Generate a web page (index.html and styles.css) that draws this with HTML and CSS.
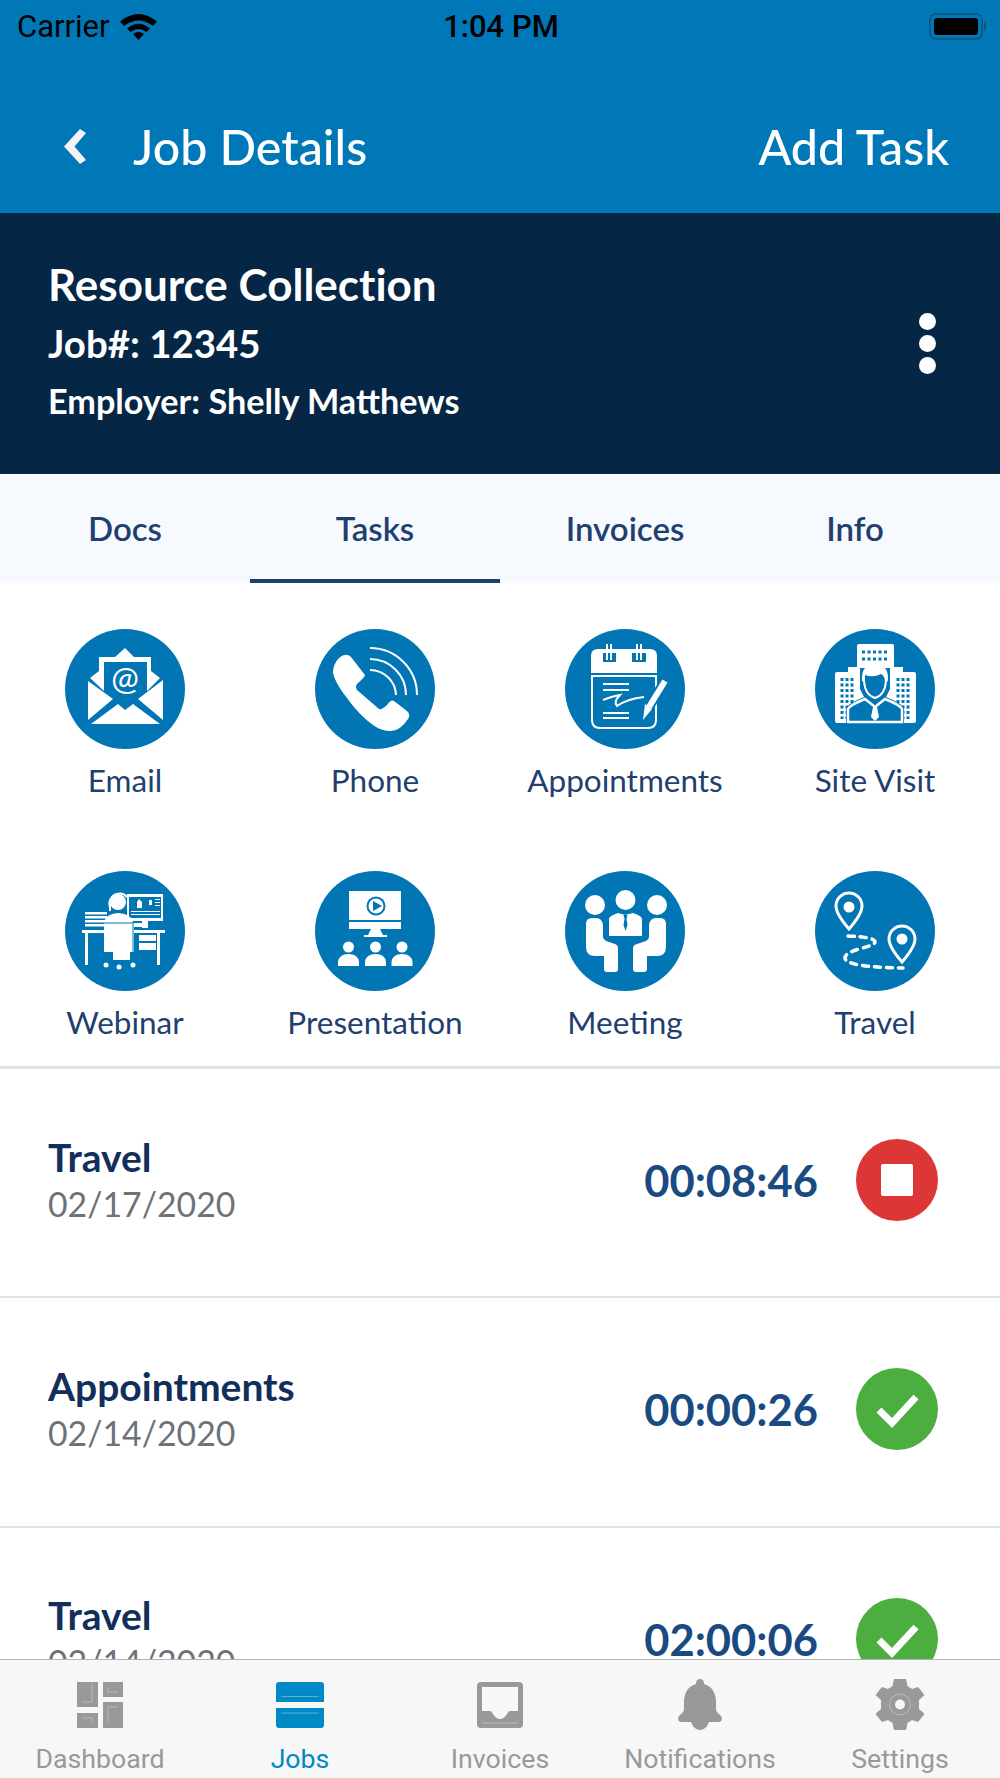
FILE: index.html
```html
<!DOCTYPE html>
<html>
<head>
<meta charset="utf-8">
<title>Job Details</title>
<link rel="stylesheet" href="styles.css">
</head>
<body>
<div class="phone">
	<!--header-->
	<div class="top">
		<div class="status">
			<div class="status-left">
				<span>Carrier</span>
				<svg class="wifi" viewBox="0 0 37 27"><path d="M0 8.500Q18.500-6.500 37 8.500L33 13Q18.500 2 4 13Z"/><path d="M7 15.500Q18.500 6 30 15.500L26.500 19Q18.500 13 10.500 19Z"/><path d="M13 21Q18.500 17 24 21L18.500 27Z"/></svg>
			</div>
			<span class="time">1:04 PM</span>
			<div class="battery"><i></i></div>
		</div>
		<div class="nav">
			<div class="nav-left">
				<svg class="back" viewBox="0 0 22 35"><path d="M16 0L22 4L10.500 17.500L22 31L16 35L0 17.500Z"/></svg>
				<span>Job Details</span>
			</div>
			<span class="add">Add Task</span>
		</div>
	</div>
	<div class="job">
		<div>
			<h1>Resource Collection</h1>
			<p class="num">Job#: 12345</p>
			<p class="emp">Employer: Shelly Matthews</p>
		</div>
		<div class="dots"><i></i><i></i><i></i></div>
	</div>
	<!--tabs-->
	<div class="tabs">
		<span>Docs</span>
		<span class="on">Tasks</span>
		<span>Invoices</span>
		<span class="last">Info</span>
	</div>
	<!--task types-->
	<div class="types">
		<div class="type">
			<svg viewBox="0 0 120 120"><circle cx="60" cy="60" r="60" class="bg"/>
				<path class="w" d="M60 19L69 28H86V42L95 49L82 62V33H39V62L25 49L34 42V28H50Z"/>
				<path class="w" d="M23 52L48 70L23 91ZM98 51L73 70L98 91ZM26 95L53 75L60 81L68 75L95 95Z"/>
				<text x="60" y="61" class="at">@</text>
			</svg>
			<span>Email</span>
		</div>
		<div class="type">
			<svg viewBox="0 0 120 120"><circle cx="60" cy="60" r="60" class="bg"/>
				<path class="w" d="M24 29Q31 23 36 28L50 46Q50 48 42 55Q40 58 42 61L64 80Q67 81 72 76Q76 70 79 72L92 82Q96 86 93 90Q85 102 76 102Q66 102 58 96Q44 86 32 69Q20 54 18 44Q18 35 24 29Z"/>
				<path class="ln" d="M55 19A47 47 0 0 1 102 66M55 30A36 36 0 0 1 91 66M55 41A26 26 0 0 1 81 66"/>
			</svg>
			<span>Phone</span>
		</div>
		<div class="type">
			<svg viewBox="0 0 120 120"><circle cx="60" cy="60" r="60" class="bg"/>
				<path class="w" d="M33 20H85Q92 20 92 27V44H26V27Q26 20 33 20ZM38 24V33H51V24ZM67 24V33H81V24Z" fill-rule="evenodd"/>
				<path class="w" d="M41 15H43V31H41ZM45 15H47V31H45ZM71 15H73V31H71ZM75 15H77V31H75Z"/>
				<path class="ln" d="M27 47H91V91Q91 99 83 99H35Q27 99 27 91Z"/>
				<path class="ln" d="M38 55H64M38 61H64M38 84H64M38 89H64"/>
				<path class="ln" d="M38 71Q48 67 55 66Q48 73 52 77Q62 70 79 68"/>
				<path class="halo" d="M100 52L84 78"/>
				<path class="pen" d="M100 52L84 78"/>
				<path class="w" d="M80 75L87 80L78 91Z"/>
			</svg>
			<span>Appointments</span>
		</div>
		<div class="type">
			<svg viewBox="0 0 120 120"><circle cx="60" cy="60" r="60" class="bg"/>
				<path class="w" d="M44 15H77Q79 15 79 17V42H42V17Q42 15 44 15Z"/>
				<path class="w" d="M33 38H88V43H99Q101 43 101 45V92Q101 94 99 94H22Q20 94 20 92V45Q20 43 22 43H33Z"/>
				<path class="win" d="M47 23H74M47 30H74M27 49V90M32 49V90M37 49V90M83 49V90M88 49V90M93 49V90"/>
				<path class="halo2" d="M45 39H75V60L71 68Q86 74 89 79V96H31V79Q34 74 49 68L45 60Z"/>
				<path class="body" d="M33 93V80Q35 76 50 70L60 78L70 70Q85 76 87 80V93Z"/>
				<path class="w" d="M47 52Q46 35 60 35Q74 35 73 52L70 53Q70 47 66 45Q58 49 50 46L50 53Z"/>
				<path class="ln" d="M49 52Q50 66 60 69Q70 66 71 52"/>
				<path class="w" d="M58 78H62L64 88L60 92L56 88Z"/>
			</svg>
			<span>Site Visit</span>
		</div>
		<div class="type">
			<svg viewBox="0 0 120 120"><circle cx="60" cy="60" r="60" class="bg"/>
				<path class="w" d="M62 23H98V50H83V57H77V50H62Z"/>
				<path class="cut" d="M64 26H96V47H64Z"/>
				<path class="w" d="M72 37V31L74 28L77 31V37ZM84 34V29H87V34ZM90 28H95V29H90ZM90 31H95V32H90ZM90 34H95V35H90ZM66 40H95V41H66ZM66 43H95V44H66Z"/>
				<path class="ln" d="M45 36A10 10 0 0 1 62 26"/>
				<path class="w" d="M44 33H46V40H44Z"/>
				<circle cx="53" cy="31" r="8" class="w"/>
				<path class="w" d="M20 41H42V43.500H20ZM20 45H42V47.500H20ZM20 49H42V51.500H20ZM20 53H42V55.500H20Z"/>
				<path class="w" d="M17 59H100V62H17ZM20 62H23V94H20ZM92 62H95V94H92ZM74 64H91V70H74ZM74 72H91V79H74Z"/>
				<path class="w" d="M53 42Q67 43 68 52H82V56H69V81H65V89H48V81H39V52Q40 43 53 42Z"/>
				<path class="edge" d="M39 52H68V81M54 89V94M43 93L54 90L66 93"/>
				<circle cx="41" cy="94" r="2.500" class="w"/><circle cx="54" cy="96" r="2.500" class="w"/><circle cx="68" cy="94" r="2.500" class="w"/>
			</svg>
			<span>Webinar</span>
		</div>
		<div class="type">
			<svg viewBox="0 0 120 120"><circle cx="60" cy="60" r="60" class="bg"/>
				<path class="w" d="M34 20H86V49H34ZM34 51H86V58H34ZM56 58H65L68 64H53ZM49 64H72V66H49Z"/>
				<circle cx="61" cy="35" r="9.500" class="cut"/>
				<circle cx="61" cy="35" r="7.500" class="w"/>
				<path class="bl" d="M58 30L67 35L58 40Z"/>
				<circle cx="33.500" cy="76" r="5.500" class="w"/><circle cx="60.500" cy="76" r="5.500" class="w"/><circle cx="87" cy="76" r="5.500" class="w"/>
				<path class="w" d="M23 95V91Q24 83 33.500 83Q43 83 44 91V95ZM50 95V91Q51 83 60.500 83Q70 83 71 91V95ZM76.500 95V91Q77.500 83 87 83Q96.500 83 97.500 91V95Z"/>
			</svg>
			<span>Presentation</span>
		</div>
		<div class="type">
			<svg viewBox="0 0 120 120"><circle cx="60" cy="60" r="60" class="bg"/>
				<circle cx="30" cy="34" r="10" class="w"/><circle cx="60.500" cy="29" r="10" class="w"/><circle cx="92" cy="34" r="10" class="w"/>
				<path class="w" d="M53 42L60 44L68 42Q77 45 77 48V65H44V48Q44 45 53 42Z"/>
				<path class="bl" d="M58.500 44H62.500L61.500 48L62.500 54L60.500 60L58.500 54L59.500 48Z"/>
				<path class="w" d="M27 47H31Q37 47 38 54V66Q38 68 41 70L50 73Q53 74 53 77V98Q53 101 50 101H42Q39 101 39 98V85H30Q21 85 21 76V53Q21 47 27 47Z"/>
				<path class="w" d="M95 47H91Q85 47 84 54V66Q84 68 81 70L72 73Q68 74 68 77V98Q68 101 71 101H79Q82 101 82 98V85H92Q101 85 101 76V53Q101 47 95 47Z"/>
			</svg>
			<span>Meeting</span>
		</div>
		<div class="type">
			<svg viewBox="0 0 120 120"><circle cx="60" cy="60" r="60" class="bg"/>
				<path class="ring" d="M34 58Q21 43 21 35A13 13 0 0 1 47 35Q47 43 34 58Z"/>
				<circle cx="34" cy="36" r="5.500" class="w"/>
				<path class="ring" d="M87 91Q74 76 74 68A13 13 0 0 1 100 68Q100 76 87 91Z"/>
				<circle cx="87" cy="68" r="5.500" class="w"/>
				<path class="dash" d="M33 65Q60 66 60 71Q60 74 44 78Q30 82 30 87Q30 96 88 97"/>
			</svg>
			<span>Travel</span>
		</div>
	</div>
	<!--task list-->
	<div class="list">
		<div class="row">
			<div class="row-text"><h3>Travel</h3><p>02/17/2020</p></div>
			<div class="timer">00:08:46</div>
			<div class="act stop"><i></i></div>
		</div>
		<div class="row">
			<div class="row-text"><h3>Appointments</h3><p>02/14/2020</p></div>
			<div class="timer">00:00:26</div>
			<div class="act done"><svg viewBox="0 0 82 82"><path d="M23 42L36 55L60 29"/></svg></div>
		</div>
		<div class="row">
			<div class="row-text"><h3>Travel</h3><p>02/14/2020</p></div>
			<div class="timer">02:00:06</div>
			<div class="act done"><svg viewBox="0 0 82 82"><path d="M23 42L36 55L60 29"/></svg></div>
		</div>
	</div>
	<!--tab bar-->
	<div class="bar">
		<div class="bar-item">
			<svg viewBox="0 0 46 46"><path d="M0 0H21V25H0ZM26 0H46V15H26ZM26 20H46V46H26ZM0 31H21V46H0Z"/><path class="gap" d="M15 1V20H5M31 5V10H41M31 41V25H41M5 36H15V41"/></svg>
			<span>Dashboard</span>
		</div>
		<div class="bar-item on">
			<svg viewBox="0 0 48 46"><path d="M3 0H45Q48 0 48 3V20H0V3Q0 0 3 0ZM0 26H48V43Q48 46 45 46H3Q0 46 0 43Z"/><path class="gap" d="M5 14.500H43M5 31H43"/></svg>
			<span>Jobs</span>
		</div>
		<div class="bar-item">
			<svg viewBox="0 0 46 46"><path fill-rule="evenodd" d="M4 0H42Q46 0 46 4V42Q46 46 42 46H4Q0 46 0 42V4Q0 0 4 0ZM5 5V29H13Q15 29 16 32Q19 37 23 37Q27 37 30 32Q31 29 33 29H41V5Z"/><path class="gap" d="M5 41H41"/></svg>
			<span>Invoices</span>
		</div>
		<div class="bar-item">
			<svg class="tall bell" viewBox="0 0 44 51"><path d="M22 0Q26 0 26 5Q37 8 38 22V30Q38 33 42 36Q46 40 42 43H31Q28 51 22 51Q16 51 13 43H2Q-2 40 2 36Q6 33 6 30V22Q7 8 18 5Q18 0 22 0Z"/></svg>
			<span>Notifications</span>
		</div>
		<div class="bar-item">
			<svg class="tall gear" viewBox="0 0 50 51"><path fill-rule="evenodd" d="M19 0H31L32.500 7L37 10L43 8L49.500 16L44 21V30L49.500 35L43 43L37 41L32.500 44L31 51H19L17.500 44L13 41L7 43L0.500 35L6 30V21L0.500 16L7 8L13 10L17.500 7ZM25 20.500A5 5 0 1 0 25 30.500A5 5 0 1 0 25 20.500Z"/><circle class="gap" cx="25" cy="25.500" r="10.500"/></svg>
			<span>Settings</span>
		</div>
	</div>
</div>
</body>
</html>
```

FILE: styles.css
```css
html,body,h1,h3,p{margin:0;padding:0;}
body{background:#fff;font-family:"Lato","Noto Sans",sans-serif;}
.phone{width:1000px;height:1778px;display:flex;flex-direction:column;overflow:hidden;}

/*header*/
.top{height:213px;background:#0078b8;color:#fff;}
.status{height:53px;display:grid;grid-template-columns:1fr auto 1fr;align-items:center;padding:0 15px 0 17px;color:#000;font:400 31px Roboto,sans-serif;}
.status-left{display:flex;align-items:center;gap:10px;}
.wifi{width:37px;height:27px;}
.time{font-weight:500;}
.battery{justify-self:end;position:relative;width:54px;height:27px;border:2px solid #055a88;border-radius:7px;padding:3px;box-sizing:border-box;margin-right:2px;}
.battery i{display:block;height:100%;background:#000;border-radius:3px;}
.battery:after{content:"";position:absolute;right:-5px;top:6px;width:2px;height:10px;background:#055a88;border-radius:0 2px 2px 0;}
.nav{display:flex;justify-content:space-between;align-items:center;height:82px;margin-top:52px;padding:0 51px 0 64px;font-size:48.300px;font-weight:500;}
.nav-left{display:flex;align-items:center;gap:47px;}
.back{width:22px;height:35px;fill:#f3f3f3;}

/*job band*/
.job{height:261px;background:#052645;color:#fff;display:flex;justify-content:space-between;align-items:center;padding:0 64px 0 48px;box-sizing:border-box;}
.job h1{font-size:44px;font-weight:700;line-height:60px;margin-top:-3px;font-variant-ligatures:none;}
.job .num{font-size:38.400px;font-weight:700;line-height:58px;}
.job .emp{font-size:34.200px;font-weight:700;line-height:58px;}
.dots{display:flex;flex-direction:column;gap:5px;}
.dots i{width:17px;height:17px;background:#fff;border-radius:50%;}

/*tabs*/
.tabs{height:106px;margin-top:3px;background:#f6f9fe;display:flex;}
.tabs span{width:250px;display:flex;align-items:center;justify-content:center;font-size:33px;font-weight:600;color:#1f3f6f;box-sizing:border-box;border-bottom:4px solid transparent;}
.tabs .on{border-bottom-color:#1f3f6f;}
.tabs .last{padding-right:40px;}

/*task types*/
.types{display:grid;grid-template-columns:repeat(4,250px);grid-auto-rows:242px;padding:46px 0 0;border-bottom:3px solid #dde3ec;height:437px;}
.type{display:flex;flex-direction:column;align-items:center;}
.type svg{width:120px;height:120px;display:block;}
.type span{margin-top:13px;font-size:31.500px;line-height:36px;color:#1f3f6f;}
.bg{fill:#0276b5;}
.w{fill:#fff;}
.bl{fill:#0276b5;}
.ln{fill:none;stroke:#fff;stroke-width:2;}
.at{fill:#fff;font:400 33px "Lato",sans-serif;text-anchor:middle;}
.halo{stroke:#0276b5;stroke-width:10;}
.pen{stroke:#fff;stroke-width:6;}
.win{fill:none;stroke:#0276b5;stroke-width:3;stroke-dasharray:3 2.500;}
.cut{fill:#0276b5;}
.halo2{fill:#0276b5;}
.body{fill:#0276b5;stroke:#fff;stroke-width:2.500;}
.edge{fill:none;stroke:#0276b5;stroke-width:1;}
.ring{fill:none;stroke:#fff;stroke-width:3;}
.dash{fill:none;stroke:#fff;stroke-width:3.500;stroke-linecap:round;stroke-dasharray:6 6;}

/*task list*/
.list{flex:1;min-height:0;overflow:hidden;}
.row{height:229.330px;border-bottom:2px solid #dde3ec;display:flex;align-items:center;padding:0 62px 5px 48px;box-sizing:border-box;}
.row-text{flex:1;}
.row h3{font-size:39px;font-weight:700;line-height:48px;color:#122f5c;}
.row p{font-size:33.800px;line-height:47px;color:#6e7277;}
.timer{font-size:43.500px;font-weight:700;color:#1a4a82;margin-right:38px;}
.act{width:82px;height:82px;border-radius:50%;display:flex;align-items:center;justify-content:center;}
.stop{background:#dc3636;}
.stop i{width:32px;height:32px;background:#fff;border-radius:2px;}
.done{background:#4cae3f;}
.done svg{width:82px;height:82px;fill:none;stroke:#fff;stroke-width:7;}

/*tab bar*/
.bar{height:118px;flex:none;background:#f7f7f7;border-top:1px solid #b3b3b3;display:flex;}
.bar-item{width:200px;display:flex;flex-direction:column;align-items:center;color:#999;font:400 26.700px Roboto,sans-serif;padding-top:22px;box-sizing:border-box;}
.bar-item svg{width:46px;height:46px;fill:#999;}
.bar-item svg.tall{height:51px;margin-top:-3px;margin-bottom:-2px;}
.bar-item svg.bell{width:44px;}
.bar-item svg.gear{width:50px;}
.bar-item span{margin-top:15px;line-height:32px;}
.bar-item.on{color:#008ac5;}
.bar-item.on svg{width:48px;fill:#008ac5;}
.gap{fill:none;stroke:#f7f7f7;stroke-width:1;opacity:.35;}
```
